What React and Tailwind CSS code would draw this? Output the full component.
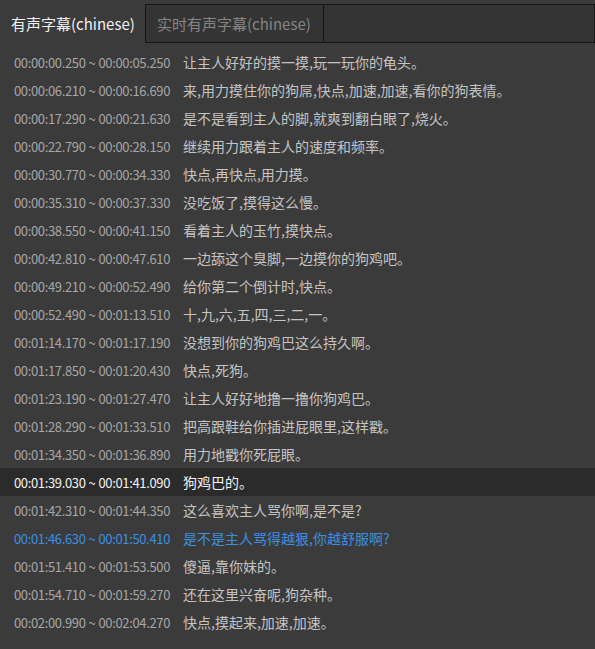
import React from "react";

const rows = [
  ["00:00:00.250", "00:00:05.250", "让主人好好的摸一摸,玩一玩你的龟头。"],
  ["00:00:06.210", "00:00:16.690", "来,用力摸住你的狗屌,快点,加速,加速,看你的狗表情。"],
  ["00:00:17.290", "00:00:21.630", "是不是看到主人的脚,就爽到翻白眼了,烧火。"],
  ["00:00:22.790", "00:00:28.150", "继续用力跟着主人的速度和频率。"],
  ["00:00:30.770", "00:00:34.330", "快点,再快点,用力摸。"],
  ["00:00:35.310", "00:00:37.330", "没吃饭了,摸得这么慢。"],
  ["00:00:38.550", "00:00:41.150", "看着主人的玉竹,摸快点。"],
  ["00:00:42.810", "00:00:47.610", "一边舔这个臭脚,一边摸你的狗鸡吧。"],
  ["00:00:49.210", "00:00:52.490", "给你第二个倒计时,快点。"],
  ["00:00:52.490", "00:01:13.510", "十,九,六,五,四,三,二,一。"],
  ["00:01:14.170", "00:01:17.190", "没想到你的狗鸡巴这么持久啊。"],
  ["00:01:17.850", "00:01:20.430", "快点,死狗。"],
  ["00:01:23.190", "00:01:27.470", "让主人好好地撸一撸你狗鸡巴。"],
  ["00:01:28.290", "00:01:33.510", "把高跟鞋给你插进屁眼里,这样戳。"],
  ["00:01:34.350", "00:01:36.890", "用力地戳你死屁眼。"],
  ["00:01:39.030", "00:01:41.090", "狗鸡巴的。", "active"],
  ["00:01:42.310", "00:01:44.350", "这么喜欢主人骂你啊,是不是?"],
  ["00:01:46.630", "00:01:50.410", "是不是主人骂得越狠,你越舒服啊?", "hover"],
  ["00:01:51.410", "00:01:53.500", "傻逼,靠你妹的。"],
  ["00:01:54.710", "00:01:59.270", "还在这里兴奋呢,狗杂种。"],
  ["00:02:00.990", "00:02:04.270", "快点,摸起来,加速,加速。"],
];

function Row({ start, end, text, state }) {
  const bg = state === "active" ? "bg-[#2b2b2b]" : "";
  const timeColor =
    state === "active"
      ? "text-[#f2f2f2]"
      : state === "hover"
      ? "text-[#3c8fe3]"
      : "text-[#a6a6a6]";
  const textColor =
    state === "active"
      ? "text-[#f2f2f2]"
      : state === "hover"
      ? "text-[#3c8fe3]"
      : "text-[#c4c4c4]";
  return (
    <div className={`flex items-center h-[28px] ${bg}`}>
      <span
        className={`w-[183px] shrink-0 pl-[14px] whitespace-nowrap text-[13px] tracking-[-0.35px] ${timeColor}`}
      >
        {start}
        <span className="mx-[3px]">~</span>
        {end}
      </span>
      <span className={`whitespace-nowrap ${textColor}`}>{text}</span>
    </div>
  );
}

export default function App() {
  return (
    <div
      className="w-[595px] h-[649px] bg-[#3b3b3b] text-[14px] leading-none overflow-hidden"
      style={{ fontFamily: '"Noto Sans CJK SC", "Noto Sans", sans-serif' }}
    >
      {/* tabs */}
      <div className="flex h-[43px] pt-[4px]">
        <div className="w-[145px] shrink-0 flex items-center pl-[11px] text-[#f0f0f0] text-[15px]">
          有声字幕(chinese)
        </div>
        <div className="flex flex-1 border border-[#151515] bg-[#343434]">
          <div className="w-[178px] flex items-center pl-[11px] border-r border-[#151515] text-[#858585] text-[15px]">
            实时有声字幕(chinese)
          </div>
          <div className="flex-1" />
        </div>
      </div>

      {/* subtitle list */}
      <div className="pt-[5px]">
        {rows.map(([s, e, t, st], i) => (
          <Row key={i} start={s} end={e} text={t} state={st} />
        ))}
      </div>
    </div>
  );
}
